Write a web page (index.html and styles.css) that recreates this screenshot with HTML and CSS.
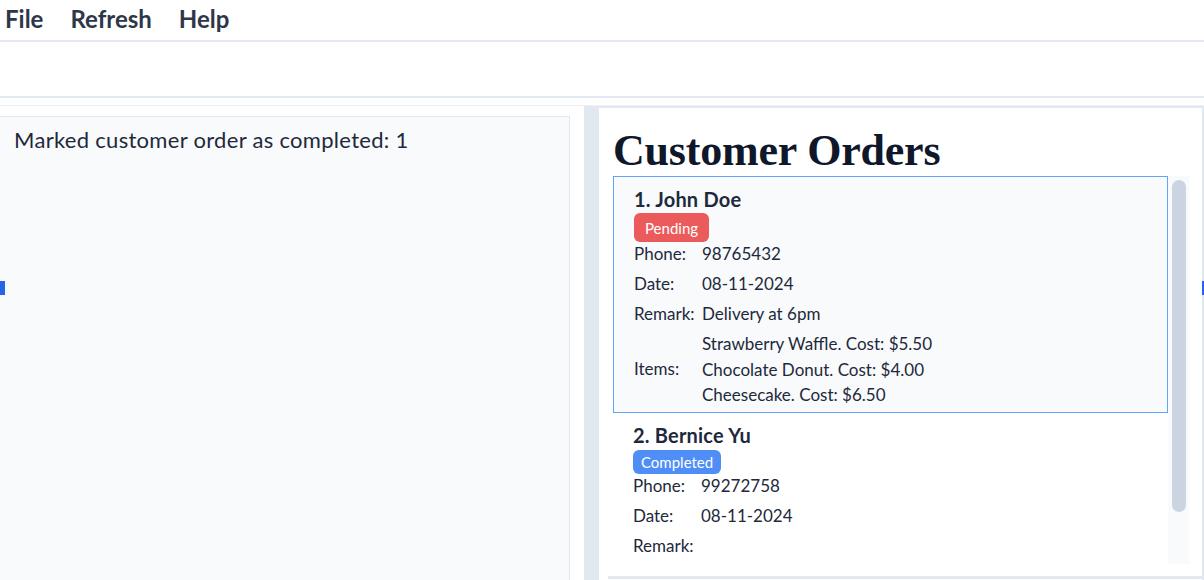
FILE: index.html
```html
<!DOCTYPE html>
<html lang="en">
<head>
<meta charset="utf-8">
<title>Customer Orders</title>
<link rel="stylesheet" href="styles.css">
</head>
<body>
<div class="app">
  <nav class="menubar">
    <span class="menu-item">File</span>
    <span class="menu-item">Refresh</span>
    <span class="menu-item">Help</span>
  </nav>
  <div class="command"></div>
  <div class="main">
    <section class="result-col">
      <div class="result-panel">Marked customer order as completed: 1</div>
    </section>
    <div class="gutter"></div>
    <div class="divider"></div>
    <section class="orders-pane">
      <h1 class="title">Customer Orders</h1>
      <div class="list-wrap">
        <div class="orders">
          <article class="card selected">
            <div class="name">1. John Doe</div>
            <div class="badges"><span class="badge pending">Pending</span></div>
            <div class="fields">
              <div class="row"><span class="label">Phone:</span><span>98765432</span></div>
              <div class="row"><span class="label">Date:</span><span>08-11-2024</span></div>
              <div class="row"><span class="label">Remark:</span><span>Delivery at 6pm</span></div>
              <div class="row items"><span class="label">Items:</span>
                <div class="item-list">
                  <div>Strawberry Waffle. Cost: $5.50</div>
                  <div>Chocolate Donut. Cost: $4.00</div>
                  <div>Cheesecake. Cost: $6.50</div>
                </div>
              </div>
            </div>
          </article>
          <article class="card">
            <div class="name">2. Bernice Yu</div>
            <div class="badges"><span class="badge completed">Completed</span></div>
            <div class="fields">
              <div class="row"><span class="label">Phone:</span><span>99272758</span></div>
              <div class="row"><span class="label">Date:</span><span>08-11-2024</span></div>
              <div class="row"><span class="label">Remark:</span><span></span></div>
            </div>
          </article>
        </div>
        <div class="scrollbar"><div class="thumb"></div></div>
      </div>
      <div class="pane-foot"></div>
    </section>
  </div>
  <div class="handle handle-left"></div>
  <div class="handle handle-right"></div>
</div>
</body>
</html>
```

FILE: styles.css
```css
* { box-sizing: border-box; }
html, body { margin: 0; padding: 0; }
body {
  width: 1204px;
  height: 580px;
  overflow: hidden;
  background: #ffffff;
  font-family: Lato, "Noto Sans", sans-serif;
  color: #1e293b;
}
.app {
  position: relative;
  height: 580px;
  display: flex;
  flex-direction: column;
}
.menubar {
  height: 42px;
  border-bottom: 2px solid #e2e8f0;
  display: flex;
  align-items: center;
  gap: 27px;
  padding-left: 5px;
  padding-bottom: 4px;
}
.menu-item {
  font-size: 24px;
  font-weight: 700;
  color: #2d3748;
}
.command {
  height: 56px;
  border-bottom: 2px solid #e2e8f0;
}
.main {
  margin-top: 7px;
  border-top: 1px solid #edf1f6;
  flex: 1;
  display: flex;
  min-height: 0;
}
.result-col {
  width: 570px;
  padding-top: 10px;
  display: flex;
  flex-direction: column;
}
.result-panel {
  flex: 1;
  background: #f8fafc;
  border-top: 1px solid #e2e8f0;
  border-right: 1px solid #e2e8f0;
  padding: 9px 14px;
  font-size: 22px;
  letter-spacing: 0.3px;
  line-height: 28px;
  color: #1e293b;
}
.gutter { width: 14px; }
.divider { width: 15px; background: #e2e8f0; }
.orders-pane {
  flex: 1;
  background: #ffffff;
  border-top: 2px solid #e2e8f0;
  border-right: 2px solid #e2e8f0;
  padding: 0 13px 0 14px;
  display: flex;
  flex-direction: column;
}
.title {
  margin: 0;
  font-family: "Liberation Serif", "Times New Roman", serif;
  font-weight: 700;
  font-size: 44px;
  line-height: 50px;
  height: 68px;
  padding-top: 18px;
  color: #0f172a;
  letter-spacing: -0.2px;
}
.list-wrap {
  height: 388px;
  display: flex;
  background: #f8fafc;
}
.orders {
  flex: 1;
  background: #ffffff;
}
.card {
  padding: 9px 20px 4px 20px;
  display: flex;
  flex-direction: column;
}
.card.selected {
  background: #f8fafc;
  border: 1px solid #60a5fa;
}
.name {
  font-size: 20px;
  font-weight: 700;
  line-height: 26px;
  color: #1e293b;
  letter-spacing: 0.2px;
}
.badges { display: flex; }
.badge {
  color: #ffffff;
  font-size: 15px;
  border-radius: 6px;
  display: inline-flex;
  align-items: center;
}
.badge.pending {
  background: #ec5b5b;
  height: 29px;
  padding: 0 11px;
  margin-top: 1px;
}
.badge.completed {
  background: #4f8ef7;
  height: 24px;
  padding: 0 8px;
  margin-top: 2px;
}
.fields {
  display: flex;
  flex-direction: column;
  gap: 6px;
  font-size: 17px;
  color: #1e293b;
}
.row {
  display: flex;
  line-height: 24px;
}
.label { width: 68px; flex: none; }
.row.items {
  align-items: center;
  margin-top: -1px;
}
.item-list div { line-height: 25.5px; }
.scrollbar {
  width: 21px;
  background: #f8fafc;
  padding: 4px 3px 0 4px;
}
.thumb {
  height: 332px;
  background: #cbd5e1;
  border-radius: 7px;
}
.pane-foot {
  margin-top: 12px;
  margin-left: -5px;
  margin-right: -13px;
  height: 3px;
  background: #e2e8f0;
}
.handle {
  position: absolute;
  top: 281px;
  height: 14px;
  background: #2563eb;
}
.handle-left { left: 0; width: 5px; }
.handle-right { right: 0; width: 2px; }
```
